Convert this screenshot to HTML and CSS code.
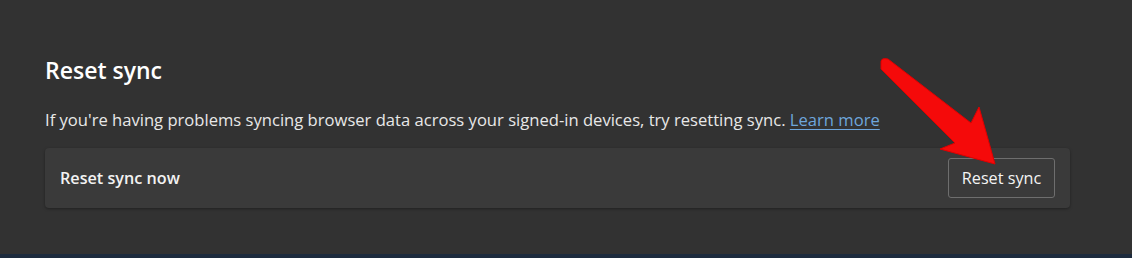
FILE: index.html
```html
<!DOCTYPE html>
<html>
<head>
<meta charset="utf-8">
<link rel="stylesheet" href="styles.css">
</head>
<body>
<div class="page">
  <section class="section">
    <h2 class="title">Reset sync</h2>
    <p class="desc">If you're having problems syncing browser data across your signed-in devices, try resetting sync. <a class="link" href="#">Learn more</a></p>
    <div class="card">
      <span class="card-label">Reset sync now</span>
      <button class="btn">Reset sync</button>
    </div>
  </section>
  <div class="taskbar"></div>
  <svg class="arrow" width="140" height="120" viewBox="870 50 140 120">
    <path d="M881 64 Q880 57 888 59 L971 123 L979 107 L995 164 L940 149 L955 143 L881 69 Z" fill="#f50a0a" stroke="#e00000" stroke-width="1" stroke-linejoin="round"/>
  </svg>
</div>
</body>
</html>
```
FILE: styles.css
```css
html, body {
  margin: 0;
  padding: 0;
  background: #323232;
}
.page {
  position: relative;
  width: 1132px;
  height: 258px;
  overflow: hidden;
  display: flex;
  flex-direction: column;
  font-family: "Open Sans", "Noto Sans", sans-serif;
  color: #ffffff;
}
.section {
  flex: 1;
  padding: 52px 0 0 45px;
  width: 1025px;
}
.title {
  margin: 0;
  font-size: 23px;
  font-weight: 600;
  line-height: 36px;
  color: #ffffff;
}
.desc {
  margin: 20px 0 0;
  font-size: 16.6px;
  line-height: 24px;
  color: #e8e8e8;
}
.link {
  color: #6ea6dc;
  text-decoration: underline;
  text-underline-offset: 3px;
}
.card {
  margin-top: 16px;
  height: 60px;
  box-sizing: border-box;
  background: #3a3a3a;
  border-radius: 4px;
  box-shadow: 0 1px 3px rgba(0,0,0,0.35);
  display: flex;
  align-items: center;
  justify-content: space-between;
  padding: 0 15px;
}
.card-label {
  font-size: 16.2px;
  font-weight: 600;
  color: #f2f2f2;
}
.btn {
  height: 40px;
  width: 107px;
  box-sizing: border-box;
  background: #3a3a3a;
  border: 1px solid #6e6e6e;
  border-radius: 3px;
  color: #f4f4f4;
  font-family: "Open Sans", "Noto Sans", sans-serif;
  font-size: 16.2px;
  padding: 0;
}
.taskbar {
  height: 4px;
  background: #1d2b3d;
}
.arrow {
  position: absolute;
  left: 870px;
  top: 50px;
}
```
